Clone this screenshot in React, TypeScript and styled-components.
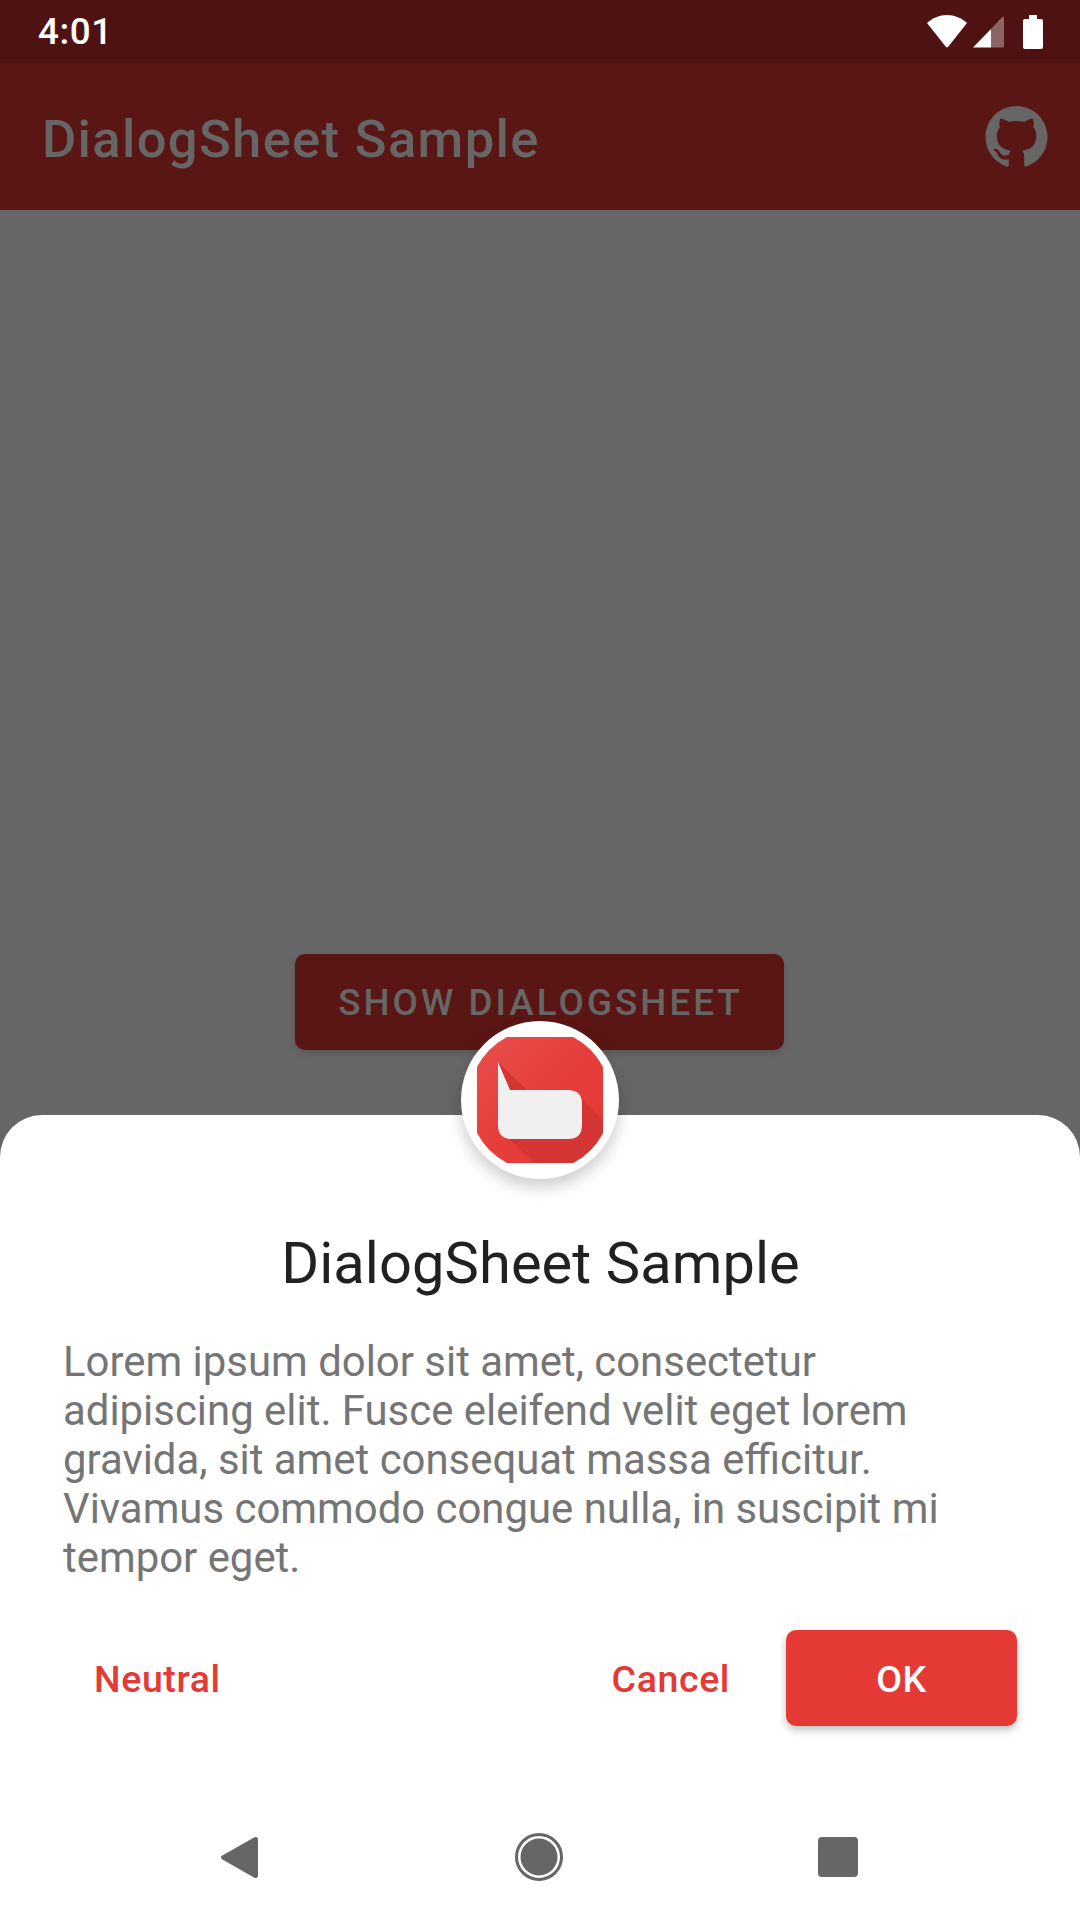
import React from "react";
import styled, { createGlobalStyle } from "styled-components";

const GlobalStyle = createGlobalStyle`
  html, body {
    margin: 0;
    padding: 0;
    background: #ffffff;
  }
  * {
    box-sizing: border-box;
  }
`;

const Screen = styled.div`
  position: relative;
  width: 1080px;
  height: 1920px;
  display: flex;
  flex-direction: column;
  overflow: hidden;
  background: #666666;
  font-family: Roboto, "Liberation Sans", sans-serif;
`;

const StatusBar = styled.div`
  height: 63px;
  flex-shrink: 0;
  padding: 0 37px 0 38px;
  display: flex;
  align-items: center;
  justify-content: space-between;
  background: #4f1212;
`;

const Clock = styled.span`
  color: #ffffff;
  font-size: 36.75px;
  font-weight: 500;
  letter-spacing: 0.6px;
`;

const StatusIcons = styled.div`
  display: flex;
  align-items: center;
`;

const AppBar = styled.header`
  height: 147px;
  flex-shrink: 0;
  padding: 0 32px 0 42px;
  display: flex;
  align-items: center;
  justify-content: space-between;
  background: #5a1614;
`;

const AppTitle = styled.h1`
  margin: 4px 0 0;
  color: #666666;
  font-size: 52.5px;
  font-weight: 500;
  letter-spacing: 1.35px;
`;

const Content = styled.main`
  flex: 1;
  display: flex;
  align-items: center;
  justify-content: center;
`;

const ShowButton = styled.div`
  width: 489px;
  height: 96px;
  margin-right: 1px;
  padding: 1px 0 0 2px;
  display: flex;
  align-items: center;
  justify-content: center;
  border-radius: 10px;
  background: #5a1614;
  box-shadow: 0 3px 6px rgba(0, 0, 0, 0.15);
  color: #666666;
  font-size: 36.75px;
  font-weight: 500;
  letter-spacing: 3.05px;
`;

const NavBar = styled.nav`
  height: 126px;
  flex-shrink: 0;
  position: relative;
  z-index: 2;
  padding-right: 2px;
  display: flex;
  align-items: center;
  justify-content: center;
  gap: 236px;
  background: #ffffff;
`;

const NavSlot = styled.div`
  width: 63px;
  height: 63px;
  display: flex;
  align-items: center;
  justify-content: center;
`;

const Sheet = styled.section`
  position: absolute;
  left: 0;
  right: 0;
  bottom: 126px;
  height: 679px;
  padding: 0 63px 0 64px;
  display: flex;
  flex-direction: column;
  border-radius: 42px 42px 0 0;
  background: #ffffff;
`;

const Badge = styled.div`
  position: absolute;
  top: -94px;
  left: 461px;
  width: 158px;
  height: 158px;
  display: flex;
  align-items: center;
  justify-content: center;
  border-radius: 50%;
  background: #ffffff;
  box-shadow: 0 8px 16px rgba(0, 0, 0, 0.2);
`;

const SheetTitle = styled.h2`
  margin: 114px 0 0;
  color: #212121;
  font-size: 57.75px;
  letter-spacing: 0.1px;
  line-height: 68px;
  font-weight: 400;
  text-align: center;
`;

const SheetBody = styled.p`
  margin: 40px 1px 0 -1px;
  color: #757575;
  font-size: 41.9px;
  line-height: 49px;
  font-weight: 400;
`;

const Actions = styled.div`
  margin-top: 48px;
  display: flex;
  align-items: center;
`;

const TextAction = styled.div<{ $push?: boolean }>`
  margin-right: ${(p) => (p.$push ? "auto" : "56px")};
  margin-left: ${(p) => (p.$push ? "30px" : "0")};
  padding-top: 2px;
  color: #e53935;
  font-size: 37.5px;
  font-weight: 500;
  letter-spacing: 0.6px;
`;

const PrimaryAction = styled.div`
  width: 231px;
  height: 96px;
  padding-top: 2px;
  display: flex;
  align-items: center;
  justify-content: center;
  border-radius: 10px;
  background: #e53935;
  box-shadow: 0 4px 8px rgba(0, 0, 0, 0.25);
  color: #ffffff;
  font-size: 37.5px;
  font-weight: 500;
  letter-spacing: 0.6px;
`;

const WifiIcon = () => (
  <svg width="40" height="33" viewBox="0 0 40 33">
    <path d="M0 8C5.5 3 12.5 0 20 0S34.5 3 40 8L21.4 31.4a1.8 1.8 0 0 1-2.8 0Z" fill="#fff" />
  </svg>
);

const SignalIcon = () => (
  <svg width="31" height="32" viewBox="0 0 31 32" style={{ marginLeft: 6, marginRight: 19 }}>
    <path d="M0 31.5 18 13V31.5Z" fill="#fff" />
    <path d="M18 13 29 1.2A1.1 1.1 0 0 1 31 2V30.5a1 1 0 0 1-1 1H18Z" fill="#fff" fillOpacity="0.35" />
  </svg>
);

const BatteryIcon = () => (
  <svg width="20" height="34" viewBox="0 0 20 34">
    <path d="M6 0h8v4h4a2 2 0 0 1 2 2v26a2 2 0 0 1-2 2H2a2 2 0 0 1-2-2V6a2 2 0 0 1 2-2h4Z" fill="#fff" />
  </svg>
);

const GithubIcon = () => (
  <svg width="63" height="62" viewBox="0 0 16 16">
    <path
      fill="#666666"
      d="M8 0C3.58 0 0 3.58 0 8c0 3.54 2.29 6.53 5.47 7.59.4.07.55-.17.55-.38 0-.19-.01-.82-.01-1.49-2.01.37-2.53-.49-2.69-.94-.09-.23-.48-.94-.82-1.13-.28-.15-.68-.52-.01-.53.63-.01 1.08.58 1.23.82.72 1.21 1.87.87 2.33.66.07-.52.28-.87.51-1.07-1.78-.2-3.64-.89-3.64-3.95 0-.87.31-1.59.82-2.15-.08-.2-.36-1.02.08-2.12 0 0 .67-.21 2.2.82.64-.18 1.32-.27 2-.27s1.36.09 2 .27c1.53-1.04 2.2-.82 2.2-.82.44 1.1.16 1.92.08 2.12.51.56.82 1.27.82 2.15 0 3.07-1.87 3.75-3.65 3.95.29.25.54.73.54 1.48 0 1.07-.01 1.93-.01 2.2 0 .21.15.46.55.38A8.01 8.01 0 0 0 16 8c0-4.42-3.58-8-8-8Z"
    />
  </svg>
);

const logoShape =
  "M30 0H96A71 71 0 0 1 126 30V96A71 71 0 0 1 96 126H30A71 71 0 0 1 0 96V30A71 71 0 0 1 30 0Z";

const AppLogo = () => (
  <svg width="126" height="127" viewBox="0 0 126 127">
    <defs>
      <linearGradient id="logoRed" x1="0" y1="0" x2="1" y2="1">
        <stop offset="0" stopColor="#ea4e4c" />
        <stop offset="0.5" stopColor="#e53e3b" />
        <stop offset="1" stopColor="#e53935" />
      </linearGradient>
      <clipPath id="logoClip">
        <path d={logoShape} />
      </clipPath>
    </defs>
    <path d={logoShape} fill="url(#logoRed)" />
    <path
      clipPath="url(#logoClip)"
      d="M21 25 50 53H96L126 83V126H57L22 92Z"
      fill="#d53532"
    />
    <path
      d="M21 25 33 53H91Q105 53 105 67V88Q105 102 91 102H35Q21 102 21 88Z"
      fill="#f0f0f0"
    />
  </svg>
);

const BackIcon = () => (
  <svg width="39" height="43" viewBox="0 0 39 43">
    <path
      d="M1 19.7 33.4 1.3A2.4 2.4 0 0 1 37 3.4V39.6A2.4 2.4 0 0 1 33.4 41.7L1 23.3A2.1 2.1 0 0 1 1 19.7Z"
      fill="#666666"
    />
  </svg>
);

const HomeIcon = () => (
  <svg width="48" height="48" viewBox="0 0 48 48">
    <circle cx="24" cy="24" r="22.5" fill="none" stroke="#666666" strokeWidth="3" />
    <circle cx="24" cy="24" r="18.5" fill="#666666" />
  </svg>
);

const RecentsIcon = () => (
  <svg width="40" height="40" viewBox="0 0 40 40">
    <rect width="40" height="40" rx="4" fill="#666666" />
  </svg>
);

export default function App() {
  return (
    <>
      <GlobalStyle />
      <Screen>
        <StatusBar>
          <Clock>4:01</Clock>
          <StatusIcons>
            <WifiIcon />
            <SignalIcon />
            <BatteryIcon />
          </StatusIcons>
        </StatusBar>
        <AppBar>
          <AppTitle>DialogSheet Sample</AppTitle>
          <GithubIcon />
        </AppBar>
        <Content>
          <ShowButton>SHOW DIALOGSHEET</ShowButton>
        </Content>
        <Sheet>
          <Badge>
            <AppLogo />
          </Badge>
          <SheetTitle>DialogSheet Sample</SheetTitle>
          <SheetBody>
            Lorem ipsum dolor sit amet, consectetur adipiscing elit. Fusce eleifend velit eget lorem
            gravida, sit amet consequat massa efficitur. Vivamus commodo congue nulla, in suscipit mi
            tempor eget.
          </SheetBody>
          <Actions>
            <TextAction $push>Neutral</TextAction>
            <TextAction>Cancel</TextAction>
            <PrimaryAction>OK</PrimaryAction>
          </Actions>
        </Sheet>
        <NavBar>
          <NavSlot>
            <BackIcon />
          </NavSlot>
          <NavSlot>
            <HomeIcon />
          </NavSlot>
          <NavSlot>
            <RecentsIcon />
          </NavSlot>
        </NavBar>
      </Screen>
    </>
  );
}
